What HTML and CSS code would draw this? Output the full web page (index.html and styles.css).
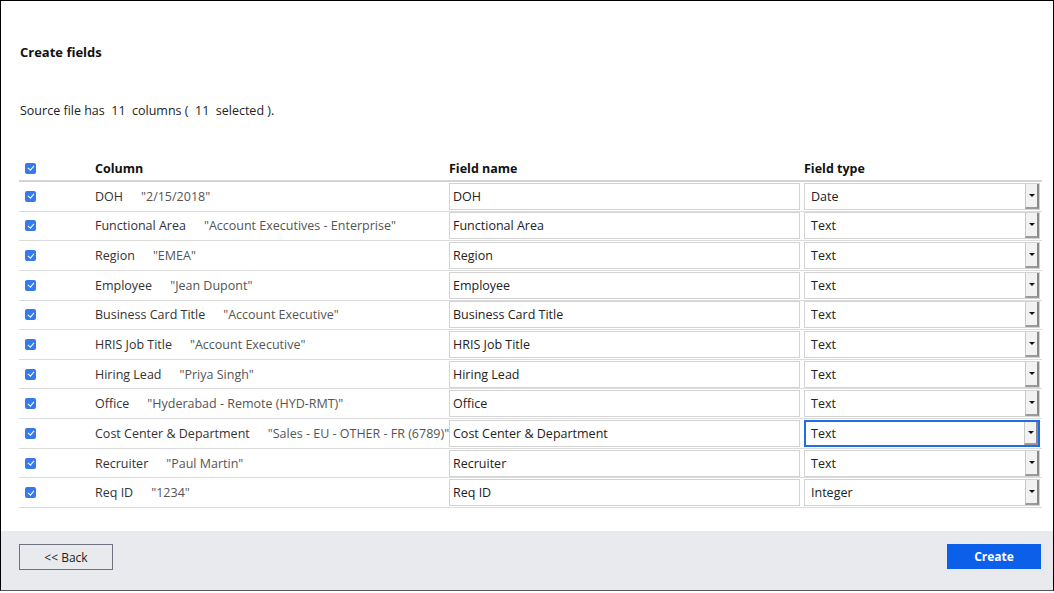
FILE: index.html
```html
<!DOCTYPE html>
<html>
<head>
<meta charset="utf-8">
<link rel="stylesheet" href="styles.css">
</head>
<body>
<div class="frame">
  <div class="main">
    <div class="title">Create fields</div>
    <div class="summary">Source file has &nbsp;11 &nbsp;columns ( &nbsp;11 &nbsp;selected ).</div>
    <div class="grid">
      <div class="hrow">
        <div class="cbcell"><span class="cb"></span></div>
        <div>Column</div>
        <div>Field name</div>
        <div>Field type</div>
      </div>

      <div class="row">
        <div class="cbcell"><span class="cb"></span></div>
        <div class="col"><span class="cname">DOH</span><span class="sample">"2/15/2018"</span></div>
        <div class="fcell"><div class="input">DOH</div></div>
        <div class="tcell"><div class="select"><span class="val">Date</span><span class="btn"><i></i></span></div></div>
      </div>
      <div class="row">
        <div class="cbcell"><span class="cb"></span></div>
        <div class="col"><span class="cname">Functional Area</span><span class="sample">"Account Executives - Enterprise"</span></div>
        <div class="fcell"><div class="input">Functional Area</div></div>
        <div class="tcell"><div class="select"><span class="val">Text</span><span class="btn"><i></i></span></div></div>
      </div>
      <div class="row">
        <div class="cbcell"><span class="cb"></span></div>
        <div class="col"><span class="cname">Region</span><span class="sample">"EMEA"</span></div>
        <div class="fcell"><div class="input">Region</div></div>
        <div class="tcell"><div class="select"><span class="val">Text</span><span class="btn"><i></i></span></div></div>
      </div>
      <div class="row">
        <div class="cbcell"><span class="cb"></span></div>
        <div class="col"><span class="cname">Employee</span><span class="sample">"Jean Dupont"</span></div>
        <div class="fcell"><div class="input">Employee</div></div>
        <div class="tcell"><div class="select"><span class="val">Text</span><span class="btn"><i></i></span></div></div>
      </div>
      <div class="row">
        <div class="cbcell"><span class="cb"></span></div>
        <div class="col"><span class="cname">Business Card Title</span><span class="sample">"Account Executive"</span></div>
        <div class="fcell"><div class="input">Business Card Title</div></div>
        <div class="tcell"><div class="select"><span class="val">Text</span><span class="btn"><i></i></span></div></div>
      </div>
      <div class="row">
        <div class="cbcell"><span class="cb"></span></div>
        <div class="col"><span class="cname">HRIS Job Title</span><span class="sample">"Account Executive"</span></div>
        <div class="fcell"><div class="input">HRIS Job Title</div></div>
        <div class="tcell"><div class="select"><span class="val">Text</span><span class="btn"><i></i></span></div></div>
      </div>
      <div class="row">
        <div class="cbcell"><span class="cb"></span></div>
        <div class="col"><span class="cname">Hiring Lead</span><span class="sample">"Priya Singh"</span></div>
        <div class="fcell"><div class="input">Hiring Lead</div></div>
        <div class="tcell"><div class="select"><span class="val">Text</span><span class="btn"><i></i></span></div></div>
      </div>
      <div class="row">
        <div class="cbcell"><span class="cb"></span></div>
        <div class="col"><span class="cname">Office</span><span class="sample">"Hyderabad - Remote (HYD-RMT)"</span></div>
        <div class="fcell"><div class="input">Office</div></div>
        <div class="tcell"><div class="select"><span class="val">Text</span><span class="btn"><i></i></span></div></div>
      </div>
      <div class="row">
        <div class="cbcell"><span class="cb"></span></div>
        <div class="col"><span class="cname">Cost Center &amp; Department</span><span class="sample">"Sales - EU - OTHER - FR (6789)"</span></div>
        <div class="fcell"><div class="input">Cost Center &amp; Department</div></div>
        <div class="tcell"><div class="select focus"><span class="val">Text</span><span class="btn"><i></i></span></div></div>
      </div>
      <div class="row">
        <div class="cbcell"><span class="cb"></span></div>
        <div class="col"><span class="cname">Recruiter</span><span class="sample">"Paul Martin"</span></div>
        <div class="fcell"><div class="input">Recruiter</div></div>
        <div class="tcell"><div class="select"><span class="val">Text</span><span class="btn"><i></i></span></div></div>
      </div>
      <div class="row">
        <div class="cbcell"><span class="cb"></span></div>
        <div class="col"><span class="cname">Req ID</span><span class="sample">"1234"</span></div>
        <div class="fcell"><div class="input">Req ID</div></div>
        <div class="tcell"><div class="select"><span class="val">Integer</span><span class="btn"><i></i></span></div></div>
      </div>
    </div>
  </div>
  <div class="footer">
    <button class="back">&lt;&lt; Back</button>
    <button class="create">Create</button>
  </div>
</div>
</body>
</html>
```

FILE: styles.css
```css
html, body {
  margin: 0;
  padding: 0;
  background: #fff;
}
body {
  font-family: "Open Sans", "Noto Sans", sans-serif;
  font-size: 12.5px;
  color: #222;
}
.frame {
  width: 1054px;
  height: 591px;
  box-sizing: border-box;
  border: 1px solid #000;
  border-bottom-color: #555;
  display: flex;
  flex-direction: column;
}
.main {
  flex: 1;
  padding: 42px 11px 0 18px;
}
.title {
  font-weight: 700;
  font-size: 13px;
  line-height: 18px;
  margin-left: 1px;
  color: #111;
}
.summary {
  line-height: 18px;
  margin: 41px 0 0 1px;
  color: #222;
}
.grid {
  margin-top: 36px;
}
.hrow, .row {
  display: grid;
  grid-template-columns: 76px 354px 355px 1fr;
  align-items: center;
}
.hrow {
  height: 24px;
  font-weight: 700;
  color: #111;
  border-bottom: 2px solid #d4d4d4;
}
.row {
  height: 28.65px;
  border-bottom: 1px solid #dcdcdc;
}
.cbcell {
  display: flex;
  align-items: center;
  padding-left: 6px;
}
.cb {
  position: relative;
  width: 11px;
  height: 11px;
  border-radius: 2px;
  background: #3579ea;
  display: inline-block;
}
.cb::after {
  content: "";
  position: absolute;
  left: 3.5px;
  top: 1.5px;
  width: 2.5px;
  height: 5px;
  border: solid #fff;
  border-width: 0 1.6px 1.6px 0;
  transform: rotate(40deg);
}
.col {
  white-space: nowrap;
  color: #333;
}
.sample {
  margin-left: 18px;
  color: #555;
}
.fcell {
  padding-right: 4px;
}
.input {
  height: 27px;
  box-sizing: border-box;
  border: 1px solid #d3d3d3;
  padding-left: 3px;
  line-height: 25px;
  color: #222;
  background: #fff;
}
.tcell {
  padding-right: 2px;
}
.select {
  height: 27px;
  box-sizing: border-box;
  border: 1px solid #d3d3d3;
  display: flex;
  align-items: stretch;
  background: #fff;
}
.select .val {
  flex: 1;
  padding-left: 6px;
  line-height: 25px;
  color: #222;
}
.select .btn {
  width: 11px;
  background: #f2f2f2;
  border-left: 1px solid #c8c8c8;
  border-right: 2px solid #8a8a8a;
  border-bottom: 2px solid #9a9a9a;
  display: flex;
  align-items: center;
  justify-content: center;
}
.select .btn i {
  width: 0;
  height: 0;
  border-left: 3px solid transparent;
  border-right: 3px solid transparent;
  border-top: 3px solid #111;
}
.select.focus {
  border: 2px solid #1f6ee6;
}
.select.focus .val {
  padding-left: 5px;
  line-height: 23px;
}
.footer {
  height: 59px;
  background: #e9eaee;
  display: flex;
  justify-content: space-between;
  align-items: flex-start;
  padding: 13px 12px 0 18px;
  box-sizing: border-box;
}
.footer button {
  font-family: "Open Sans", "Noto Sans", sans-serif;
  font-size: 12px;
  cursor: pointer;
}
.back {
  width: 94px;
  height: 26px;
  background: #e9eaee;
  border: 1px solid #6f727c;
  color: #222;
}
.create {
  width: 94px;
  height: 25px;
  background: #0b5fe9;
  border: none;
  color: #fff;
  font-weight: 700;
  font-size: 13px;
}
```
